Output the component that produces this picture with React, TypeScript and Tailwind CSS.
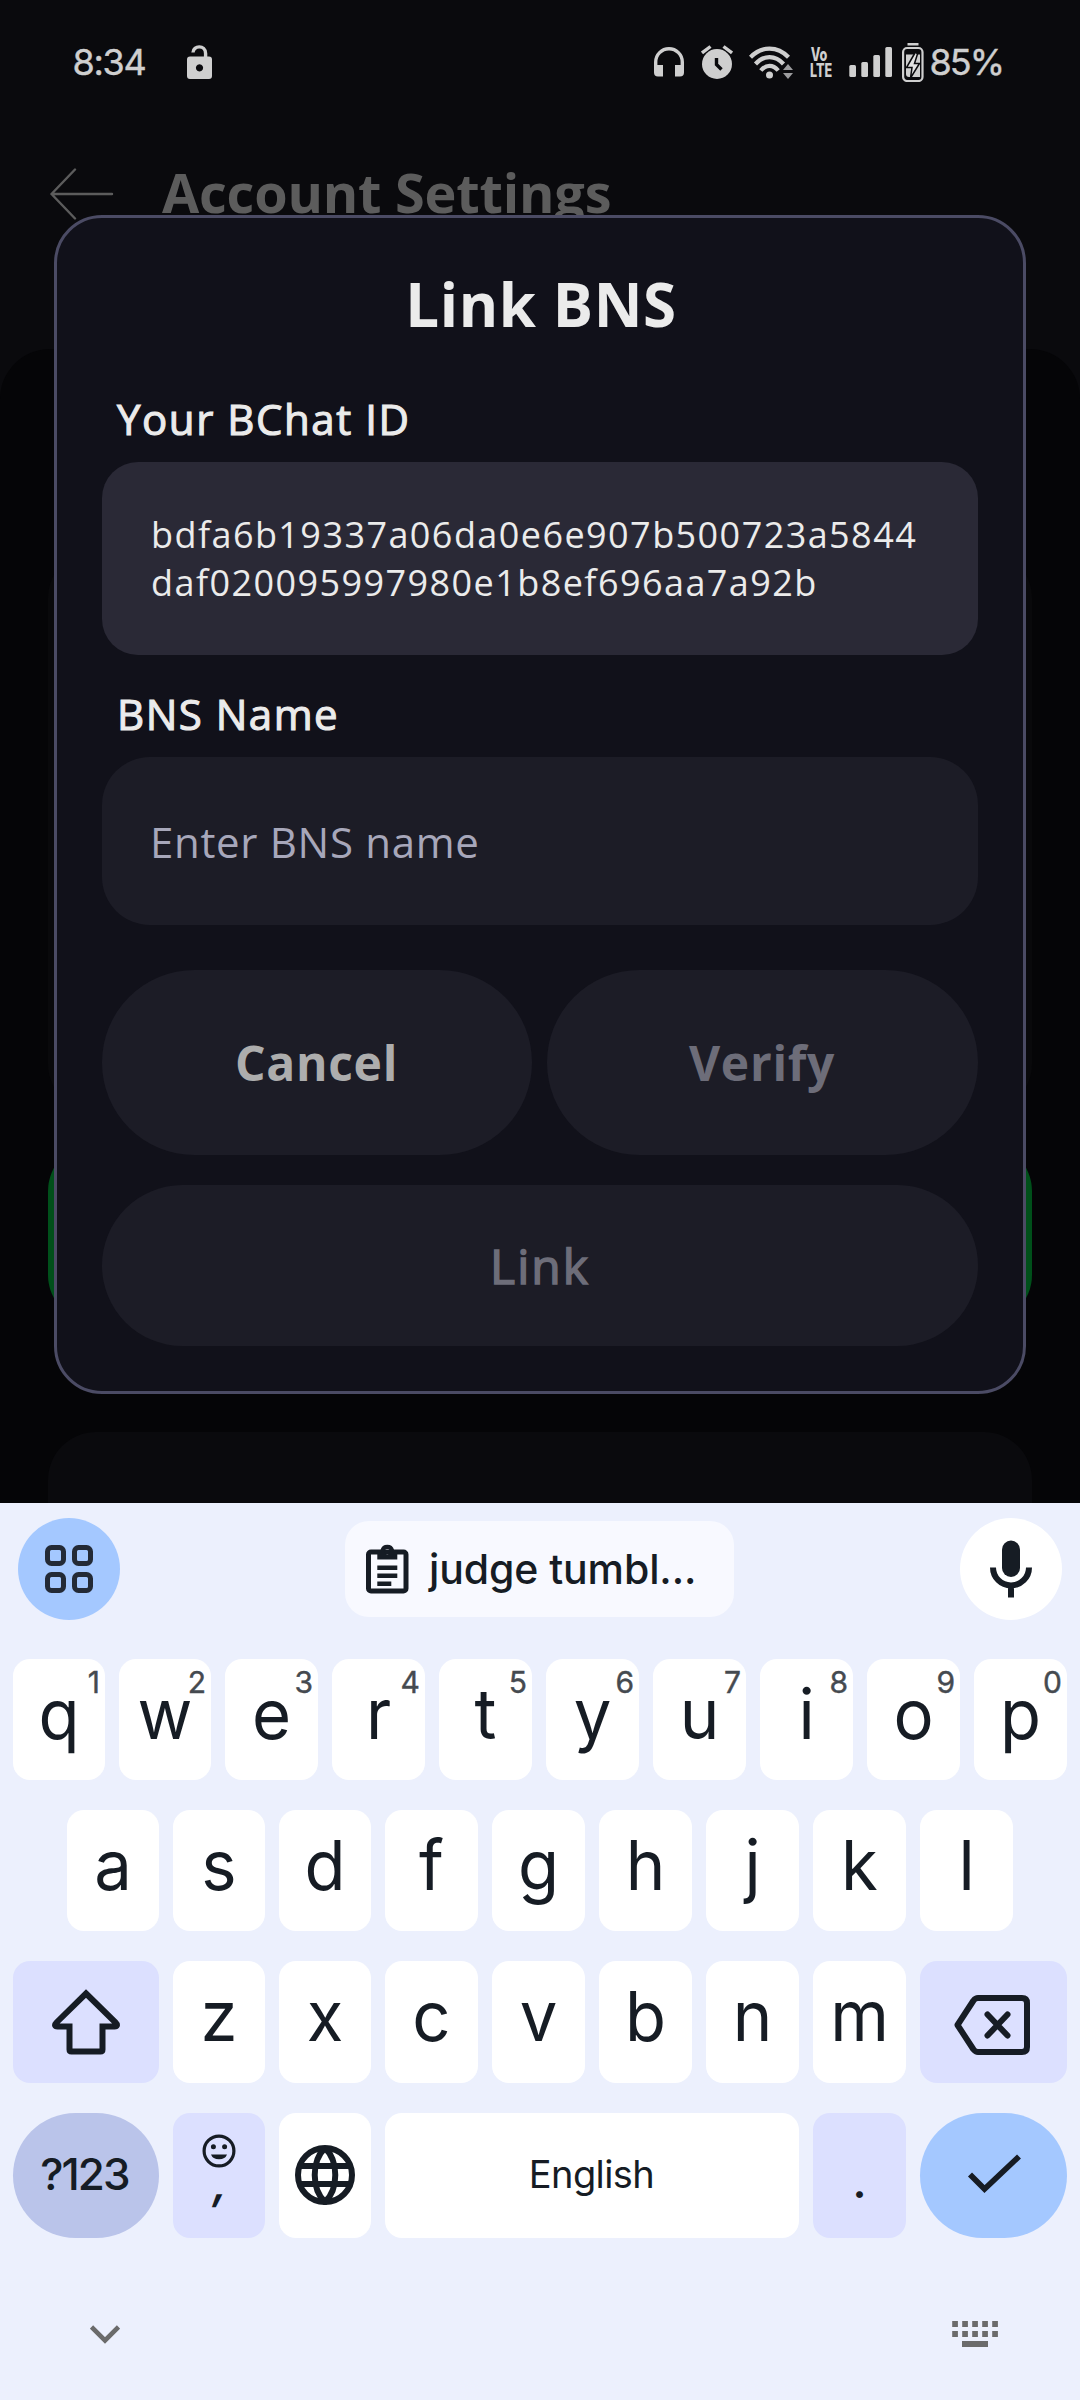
import React from "react";

const INTER = "font-['Inter',sans-serif]";

function StatusBar() {
  return (
    <div className={`flex h-[124px] items-center text-[36px] leading-[124px] text-[#cfcfcf] ${INTER}`}>
      <span className="ml-[72.500px] w-[73.500px] whitespace-nowrap tracking-[-1.300px] [-webkit-text-stroke:0.400px_#cfcfcf]">8:34</span>
      <svg className="ml-[39px] shrink-0" width="28" height="36" viewBox="0 0 28 36">
        <path d="M8 8.5C8 1.2 20.6 0.6 20.6 9.5V14" fill="none" stroke="#cfcfcf" strokeWidth="3.4" />
        <path fillRule="evenodd" fill="#cfcfcf" d="M5 12.5h19a3 3 0 0 1 3 3V32a3 3 0 0 1-3 3H5a3 3 0 0 1-3-3V15.500a3 3 0 0 1 3-3zM14.500 20.300a3.600 3.600 0 1 0 0.010 0z" />
      </svg>
      <svg className="ml-[441px] shrink-0" width="30" height="30" viewBox="0 0 30 30">
        <path d="M1.700 22V15a13.300 13.300 0 0 1 26.600 0v7" fill="none" stroke="#cfcfcf" strokeWidth="3.400" />
        <path fill="#cfcfcf" d="M0 18h9v11.500H4a4 4 0 0 1-4-4zM21 18h9v7.500a4 4 0 0 1-4 4h-5z" />
      </svg>
      <svg className="ml-[17px] shrink-0" width="32" height="34" viewBox="0 0 32 34">
        <circle cx="16" cy="19" r="15" fill="#cfcfcf" />
        <path d="M1 8L9.500 1.500M31 8L22.500 1.500" stroke="#cfcfcf" strokeWidth="3.400" fill="none" />
        <path d="M15.500 13v6.500l5 5" stroke="#0a0a0d" strokeWidth="3.400" fill="none" />
      </svg>
      <svg className="ml-[16px] shrink-0" width="44" height="36" viewBox="0 0 44 36">
        <g fill="none" stroke="#cfcfcf" strokeWidth="4.200">
          <path d="M1.500 13.300C12.500 1.800 28.500 1.800 39.500 13.300" />
          <path d="M6.500 20C14.500 10.800 26.500 10.800 34.500 20" />
          <path d="M11.800 26.500C17 20.300 24 20.300 29.200 26.500" />
        </g>
        <circle cx="20.500" cy="31" r="3.500" fill="#cfcfcf" />
        <path d="M39 20l5 6H34zM39 35l5-6H34z" fill="#9c9c9e" />
      </svg>
      <div className="ml-[17px] flex w-[24px] origin-left scale-x-[0.680] flex-col text-[18.500px] leading-[16.500px] font-extrabold">
        <span className="ml-[1px]">Vo</span>
        <span>LTE</span>
      </div>
      <svg className="ml-[15px] shrink-0" width="43" height="30" viewBox="0 0 43 30" fill="#cfcfcf">
        <rect x="0.300" y="18" width="6.700" height="12" rx="1.500" />
        <rect x="12.300" y="15" width="6.700" height="15" rx="1.500" />
        <rect x="24.300" y="8" width="6.700" height="22" rx="1.500" />
        <rect x="36.300" y="0" width="6.700" height="30" rx="1.500" />
      </svg>
      <svg className="ml-[10px] shrink-0" width="22" height="40" viewBox="0 0 22 40">
        <rect x="5.500" y="1" width="11" height="2.500" fill="#cfcfcf" />
        <rect x="1.100" y="6" width="19.400" height="33" rx="4" fill="none" stroke="#cfcfcf" strokeWidth="2.200" />
        <path d="M4 12.500h14V35H7a3 3 0 0 1-3-3z" fill="#cfcfcf" />
        <path d="M13.500 10L4.500 25.500H10L8.500 36L17.500 21.500H12.500L15.500 12z" fill="#e2e2e2" stroke="#0a0a0d" strokeWidth="1.500" />
      </svg>
      <span className="ml-[5.500px] tracking-[-1.900px] [-webkit-text-stroke:0.400px_#cfcfcf]">85%</span>
    </div>
  );
}

function SettingsScreen() {
  return (
    <div className="flex h-full flex-col bg-[#0a0a0d]">
      <StatusBar />
      <div className="flex h-[136px] shrink-0 items-center">
        <svg className="mt-[4px] ml-[50px]" width="64" height="52" viewBox="0 0 64 52" fill="none" stroke="#5c5c5c" strokeWidth="2.400" strokeLinecap="round" strokeLinejoin="round">
          <path d="M62 26H1.500M25 1.500L1.500 26L25 50.500" />
        </svg>
        <h1 className="ml-[48px] text-[54px] leading-[74px] font-bold tracking-[-0.200px] text-[#5c5c5c] font-['Open_Sans',sans-serif]">Account Settings</h1>
      </div>
      <div className="mt-[89px] flex grow flex-col rounded-t-[50px] bg-[#050507] px-[48px] pt-[201px]">
        <div className="h-[562px] shrink-0 rounded-[48px] bg-[#09090b]" />
        <div className="mt-[31px] h-[180px] shrink-0 rounded-[48px] bg-[#00501a]" />
        <div className="mt-[109px] grow rounded-t-[48px] bg-[#0a0a0d]" />
      </div>
    </div>
  );
}

function LinkDialog() {
  const label = "pl-[15px] text-[42px] leading-[56px] text-[#ebebeb] [-webkit-text-stroke:1.100px_#ebebeb]";
  return (
    <div className="absolute inset-x-[54px] top-[215px] flex flex-col rounded-[48px] border-[3px] border-[#4b4b64] bg-[#11111a] px-[45px] pt-[46px] pb-[45px] font-['Open_Sans',sans-serif]">
      <h2 className="pl-[2px] text-center text-[60px] leading-[80px] font-bold tracking-[0.600px] text-[#ebebeb]">Link BNS</h2>
      <div className={`mt-[47px] tracking-[1.550px] ${label}`}>Your BChat ID</div>
      <div className="mt-[15px] flex h-[193px] flex-col justify-center rounded-[36px] bg-[#2a2936] pl-[49px] text-[36px] leading-[48px] tracking-[1.430px] whitespace-nowrap text-[#ebebeb]">
        <span>bdfa6b19337a06da0e6e907b500723a5844</span>
        <span>daf020095997980e1b8ef696aa7a92b</span>
      </div>
      <div className={`mt-[31px] tracking-[1.500px] ${label}`}>BNS Name</div>
      <div className="mt-[15px] flex h-[168px] items-center rounded-[48px] bg-[#1c1c26] pl-[48px] text-[42px] tracking-[0.680px] text-[#a7a7ba]">Enter BNS name</div>
      <div className="mt-[45px] flex h-[185px] gap-[15px] text-[48px] font-bold tracking-[0.700px]">
        <button className="w-[430px] rounded-full bg-[#1c1c26] pr-[1px] text-[#adadad]">Cancel</button>
        <button className="flex-1 rounded-full bg-[#1c1c26] pr-[1px] text-[#6d6d79]">Verify</button>
      </div>
      <button className="mt-[30px] h-[161px] rounded-full bg-[#1c1c26] text-[48px] tracking-[2px] text-[#6d6d79] [-webkit-text-stroke:1.500px_#6d6d79]">Link</button>
    </div>
  );
}

function LetterKey({ letter, hint, narrow }: { letter: string; hint?: string; narrow?: boolean }) {
  return (
    <div className={`relative shrink-0 rounded-[17px] bg-white text-center text-[67px] leading-[111px] ${narrow ? "w-[92px]" : "w-[93px]"}`}>
      <span className="inline-block origin-[50%_72%] scale-y-[1.030]">{letter}</span>
      {hint && <span className="absolute top-0 right-[5px] text-[30px] leading-[46px] text-[#454a50] [-webkit-text-stroke:0.400px_#454a50]">{hint}</span>}
    </div>
  );
}

function Keyboard() {
  return (
    <div className={`flex h-[897px] flex-col bg-[#ecf0fd] px-[13px] pt-[15px] text-[#161c24] ${INTER}`}>
      <div className="flex h-[102px] items-center pl-[5px]">
        <div className="flex size-[102px] items-center justify-center rounded-full bg-[#a4c8ff]">
          <svg className="-ml-px" width="48" height="48" viewBox="0 0 48 48" fill="none" stroke="#232a36" strokeWidth="5">
            <rect x="2.500" y="2.500" width="16" height="16" rx="4" />
            <rect x="29.500" y="2.500" width="16" height="16" rx="4" />
            <rect x="2.500" y="29.500" width="16" height="16" rx="4" />
            <rect x="29.500" y="29.500" width="16" height="16" rx="4" />
          </svg>
        </div>
        <div className="ml-[225px] flex h-[96px] w-[389px] items-center rounded-[24px] bg-[#f8f9ff] pl-[20px]">
          <svg className="shrink-0" width="44" height="52" viewBox="0 0 44 52">
            <rect x="3.500" y="9" width="37.500" height="39" rx="2.500" fill="none" stroke="#161c24" strokeWidth="5" />
            <path fillRule="evenodd" fill="#161c24" d="M12.300 7H15.500a7 7 0 0 1 13.600 0H32.300V16.500H12.300zM22.300 6a2.700 2.700 0 1 0 0.010 0z" />
            <path fill="#161c24" d="M12.300 22.500h20v4.500h-20zM12.300 30.500h20v4.500h-20zM12.300 38.500h14v4.500h-14z" />
          </svg>
          <span className="ml-[20px] text-[41px] leading-[96px] font-medium tracking-[-0.100px] whitespace-nowrap">judge tumbl...</span>
        </div>
        <div className="ml-[226px] flex size-[102px] items-center justify-center rounded-full bg-white">
          <svg width="42" height="60" viewBox="0 0 42 60">
            <rect x="12" y="1.500" width="18" height="36.500" rx="9" fill="#161c24" />
            <path d="M3 28.500a18 18 0 0 0 36 0M21 46.500v12" fill="none" stroke="#161c24" strokeWidth="6" />
          </svg>
        </div>
      </div>

      <div className="mt-[39px] flex h-[121px] gap-[14px]">
        {"qwertyuiop".split("").map((c, i) => (
          <LetterKey key={c} letter={c} hint={String((i + 1) % 10)} narrow={i < 2} />
        ))}
      </div>
      <div className="mt-[30px] flex h-[121px] gap-[14px] pl-[54px]">
        {"asdfghjkl".split("").map((c, i) => (
          <LetterKey key={c} letter={c} narrow={i < 3} />
        ))}
      </div>
      <div className="mt-[30px] flex h-[122px] gap-[14px]">
        <div className="flex w-[146px] items-center justify-center rounded-[17px] bg-[#dce0ff]">
          <svg width="68" height="66" viewBox="0 0 68 66" fill="none" stroke="#161c24" strokeWidth="6">
            <path d="M34 4.500L63.500 33.500C66 36 65 37.500 62.500 37.500H50.500V60.500Q50.500 62.500 48.500 62.500H19.500Q17.500 62.500 17.500 60.500V37.500H5.500C3 37.500 2 36 4.500 33.500Z" />
          </svg>
        </div>
        {"zxcvbnm".split("").map((c, i) => (
          <LetterKey key={c} letter={c} narrow={i < 2} />
        ))}
        <div className="flex w-[147px] items-center justify-center rounded-[17px] bg-[#dce0ff]">
          <svg className="mt-[6px] -ml-[4px]" width="78" height="62" viewBox="0 0 78 62" fill="none" stroke="#161c24" strokeWidth="6" strokeLinejoin="round" strokeLinecap="round">
            <path d="M4.500 31L20.500 6.500Q22.500 4 25 4H69Q74 4 74 9V53Q74 58 69 58H25Q22.500 58 20.500 55.500Z" />
            <path d="M34.500 20.500L54.500 41.500M54.500 20.500L34.500 41.500" />
          </svg>
        </div>
      </div>
      <div className="mt-[30px] flex h-[125px] gap-[14px]">
        <div className="w-[146px] rounded-full bg-[#bac4ea] pr-[3px] text-center text-[44px] leading-[122px] font-medium tracking-[-1.900px]">?123</div>
        <div className="w-[92px] rounded-[17px] bg-[#dce0ff] text-center text-[44px] font-semibold">
          <svg className="mx-auto mt-[21px]" width="34" height="34" viewBox="0 0 34 34">
            <circle cx="17" cy="17" r="14.900" fill="none" stroke="#161c24" strokeWidth="3.200" />
            <circle cx="11.400" cy="12.800" r="2.500" fill="#161c24" />
            <circle cx="22.600" cy="12.800" r="2.500" fill="#161c24" />
            <path d="M9 20.500h16a8.300 6.500 0 0 1-16 0z" fill="#161c24" />
          </svg>
          <span className="ml-[5px] block -skew-x-12 leading-[30px]">,</span>
        </div>
        <div className="flex w-[92px] items-center justify-center rounded-[17px] bg-white">
          <svg className="-mt-px" width="60" height="60" viewBox="0 0 60 60" fill="none" stroke="#161c24" strokeWidth="6">
            <circle cx="30" cy="30" r="27" />
            <path d="M4 21H56M4 39H56M30 3C16.300 16 16.300 44 30 57C43.700 44 43.700 16 30 3" />
          </svg>
        </div>
        <div className="flex-1 rounded-[17px] bg-white pr-[1px] text-center text-[38px] leading-[123px] tracking-[-0.600px]">English</div>
        <div className="w-[93px] rounded-[17px] bg-[#dce0ff] text-center text-[44px] leading-[138px] font-semibold">.</div>
        <div className="flex w-[147px] items-center justify-center rounded-full bg-[#a4c8ff]">
          <svg className="-mt-px" width="54" height="42" viewBox="0 0 54 42" fill="none" stroke="#161c24" strokeWidth="5.700">
            <path d="M3 20.500L17.500 35L52 2.500" />
          </svg>
        </div>
      </div>

      <div className="mt-[80px] flex items-center justify-between px-[77px]">
        <svg className="mt-[2px]" width="30" height="20" viewBox="0 0 30 20" fill="none" stroke="#6b6b6b" strokeWidth="4.600">
          <path d="M1.500 2L15 15.500L28.500 2" />
        </svg>
        <svg className="-mr-[8px]" width="46" height="32" viewBox="0 0 46 32" fill="#6b6b6b">
          {[0, 1, 2, 3, 4].map((i) => (
            <g key={i}>
              <rect x={i * 10 + 0.2} y="3" width="5.700" height="6" />
              <rect x={i * 10 + 0.2} y="13" width="5.700" height="6" />
            </g>
          ))}
          <rect x="10" y="23" width="26" height="6" />
        </svg>
      </div>
    </div>
  );
}

export default function App() {
  return (
    <div className="flex h-[2400px] w-[1080px] flex-col overflow-hidden">
      <div className="relative h-[1503px] shrink-0 overflow-hidden">
        <SettingsScreen />
        <LinkDialog />
      </div>
      <Keyboard />
    </div>
  );
}
